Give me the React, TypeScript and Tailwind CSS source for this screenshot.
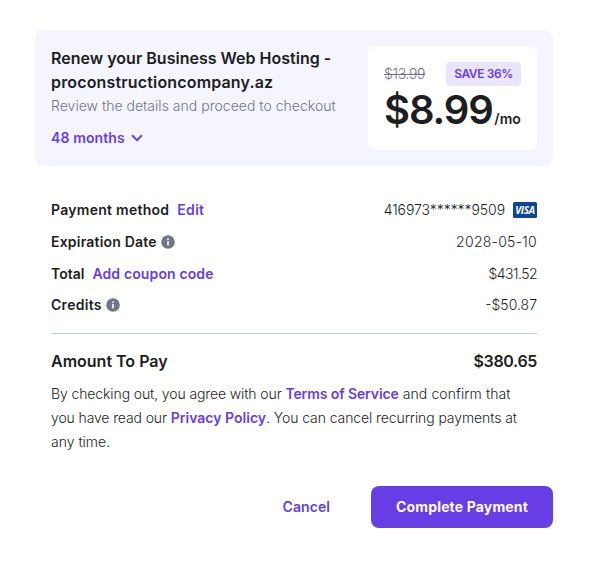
import type { ReactNode } from 'react';

function InfoIcon() {
  return (
    <svg className="ml-1 size-[14px] shrink-0" viewBox="0 0 14 14">
      <circle cx="7" cy="7" r="6.8" fill="#727586" />
      <rect x="6.2" y="6" width="1.6" height="4.4" fill="#fff" />
      <rect x="6.2" y="3.4" width="1.6" height="1.6" fill="#fff" />
    </svg>
  );
}

function VisaBadge() {
  return (
    <span className="ml-2 flex h-4 w-6 items-center justify-center rounded-[1.5px] bg-[#0f4595] font-['Open_Sans',sans-serif] text-[10px] leading-none font-bold tracking-[-0.3px] text-white italic">
      VISA
    </span>
  );
}

function Row({ label, children }: { label: ReactNode; children: ReactNode }) {
  return (
    <div className="flex h-6 items-center justify-between whitespace-nowrap last:-mt-px">
      <div className="flex items-center font-semibold">{label}</div>
      <div className="flex items-center font-light">{children}</div>
    </div>
  );
}

export default function App() {
  return (
    <main className="h-[564px] w-[590px] bg-white pt-[30px] pr-[37px] pl-[35px] font-['Inter',sans-serif] text-[14px] leading-6 text-[#1d1e20]">
      <section className="flex h-[136px] justify-between rounded-lg bg-[#f4f5ff] p-4">
        <div className="whitespace-nowrap">
          <h1 className="text-[16px] font-semibold">
            <span className="block tracking-[0.01px]">Renew your Business Web Hosting -</span>
            <span className="block tracking-[0.16px]">proconstructioncompany.az</span>
          </h1>
          <p className="font-light tracking-[0.02px] text-[#727586]">Review the details and proceed to checkout</p>
          <button className="mt-2 flex h-6 items-center font-semibold text-[#673de6]">
            <span className="tracking-[0.12px]">48 months</span>
            <svg className="ml-[6px] h-2 w-3" viewBox="0 0 12 8" fill="none" stroke="currentColor" strokeWidth="2">
              <path d="M1 1.2 6 6.2 11 1.2" />
            </svg>
          </button>
        </div>
        <div className="h-[104px] w-[169px] rounded-lg bg-white p-4 whitespace-nowrap">
          <div className="flex h-6 items-center justify-between">
            <span className="font-light tracking-[-0.35px] text-[#727586] line-through">$13.99</span>
            <span className="flex h-6 w-[75px] items-center justify-center rounded bg-[#ebe4ff] text-[12px] font-semibold tracking-[-0.4px] text-[#673de6]">SAVE 36%</span>
          </div>
          <div className="flex h-12 items-baseline justify-between leading-12">
            <span className="text-[40px] font-semibold tracking-[-1.1px]">$8.99</span>
            <span className="font-semibold tracking-[0.1px]">/mo</span>
          </div>
        </div>
      </section>

      <section className="px-4 pt-8">
        <div className="flex flex-col gap-2">
          <Row label={<><span className="tracking-[0.27px]">Payment method</span><a className="ml-2 tracking-[0.3px] text-[#673de6]">Edit</a></>}>
            <span className="tracking-[-0.07px]">416973******9509</span>
            <VisaBadge />
          </Row>
          <Row label={<><span className="tracking-[0.2px]">Expiration Date</span><InfoIcon /></>}>
            <span className="tracking-[0.27px]">2028-05-10</span>
          </Row>
          <Row label={<><span>Total</span><a className="ml-2 tracking-[0.13px] text-[#673de6]">Add coupon code</a></>}>
            <span className="tracking-[-0.55px]">$431.52</span>
          </Row>
          <Row label={<><span className="tracking-[0.28px]">Credits</span><InfoIcon /></>}>
            <span>-$50.87</span>
          </Row>
        </div>
        <hr className="mt-4 border-[#c1c9e8]" />
        <div className="mt-[15px] flex h-6 items-center justify-between text-[16px] font-semibold">
          <span>Amount To Pay</span>
          <span className="tracking-[-0.35px]">$380.65</span>
        </div>
        <p className="mt-[9px] font-light whitespace-nowrap">
          <span className="block tracking-[-0.11px]">By checking out, you agree with our <a className="font-semibold tracking-[-0.1px] text-[#673de6]">Terms of Service</a><span className="tracking-[0.09px]"> and confirm that</span></span>
          <span className="block tracking-[-0.12px]">you have read our <a className="font-semibold tracking-[0.02px] text-[#673de6]">Privacy Policy</a><span className="tracking-[-0.09px]">. You can cancel recurring payments at</span></span>
          <span className="block">any time.</span>
        </p>
      </section>

      <footer className="mt-8 flex items-center justify-end whitespace-nowrap">
        <button className="mr-[41px] font-semibold tracking-[0.08px] text-[#673de6]">Cancel</button>
        <button className="h-[42px] w-[182px] rounded-lg bg-[#673de6] font-bold tracking-[0.15px] text-white">Complete Payment</button>
      </footer>
    </main>
  );
}
